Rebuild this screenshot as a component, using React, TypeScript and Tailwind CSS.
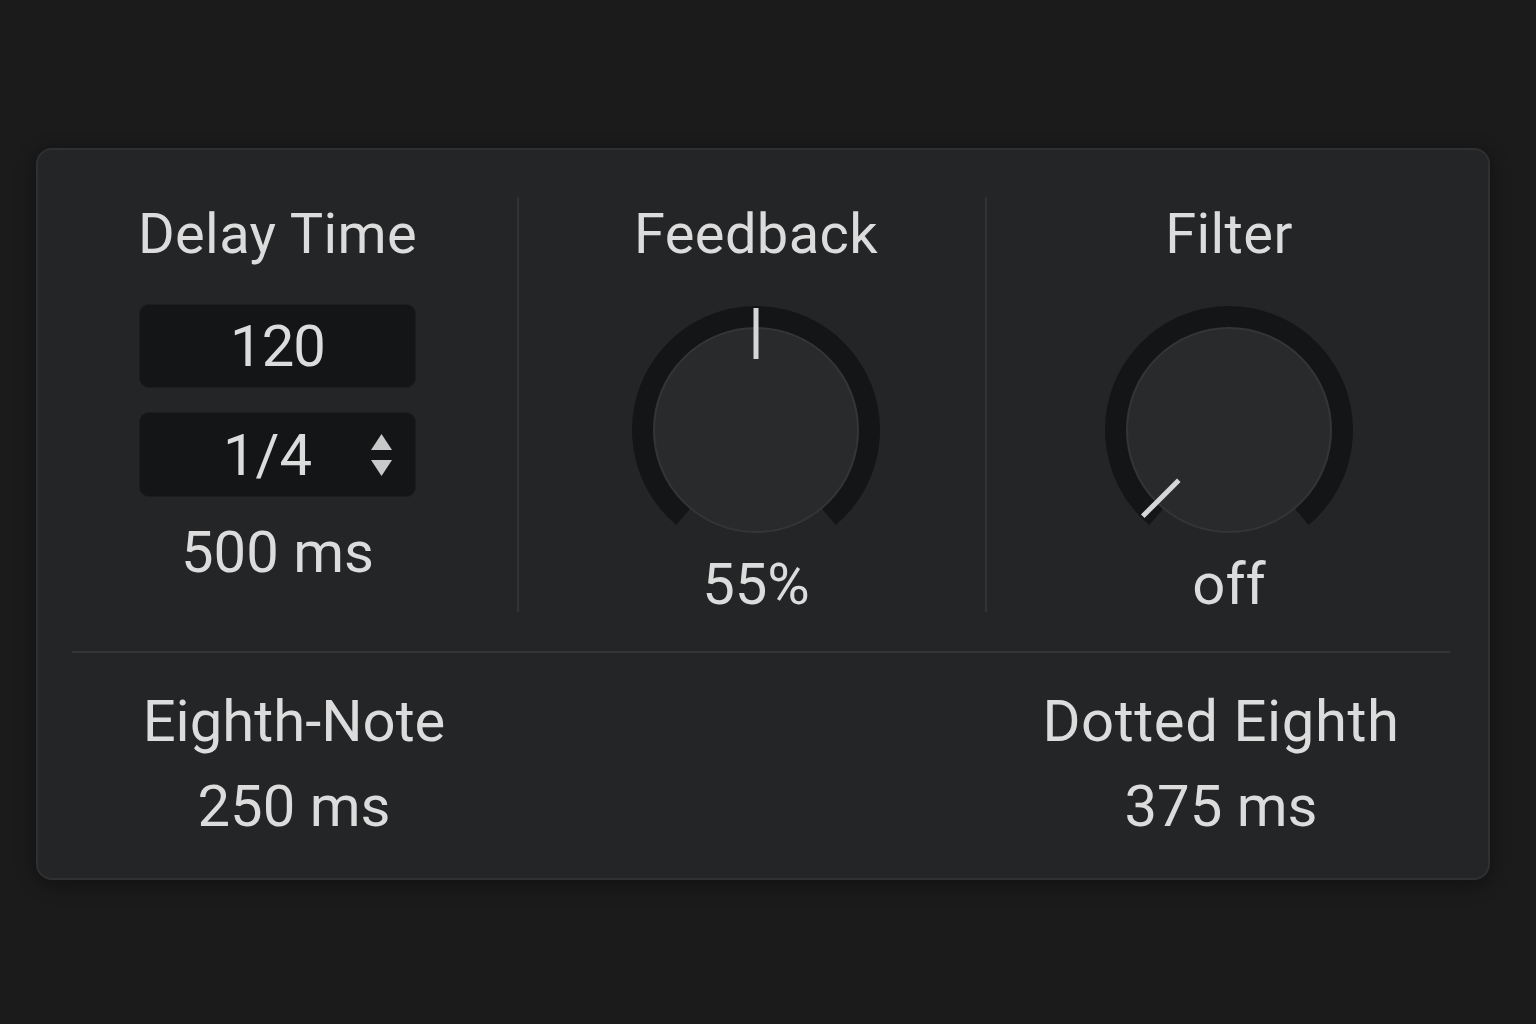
const font = { fontFamily: "Roboto, 'Liberation Sans', sans-serif" };

function Knob({ angle }: { angle: number }) {
  // angle in degrees from top, clockwise
  const c = 125;
  const rad = (angle * Math.PI) / 180;
  const dx = Math.sin(rad);
  const dy = -Math.cos(rad);
  const r1 = 122;
  const r2 = 71;
  return (
    <svg width="250" height="250" viewBox="0 0 250 250">
      <path
        d="M 52.4 211.6 A 113 113 0 1 1 197.6 211.6"
        fill="none"
        stroke="#141516"
        strokeWidth="22"
      />
      <circle cx={c} cy={c} r="102" fill="#292a2c" stroke="#333538" strokeWidth="2" />
      <line
        x1={c + dx * r1}
        y1={c + dy * r1}
        x2={c + dx * r2}
        y2={c + dy * r2}
        stroke="#d6d6d6"
        strokeWidth="5"
      />
    </svg>
  );
}

function Title({ children }: { children: string }) {
  return <p className="text-[56px] leading-none text-[#dcdcdc] tracking-[0.4px]">{children}</p>;
}

function Value({ children, className = "" }: { children: string; className?: string }) {
  return <p className={`text-[58px] leading-none text-[#dcdcdc] ${className}`}>{children}</p>;
}

export default function App() {
  return (
    <div className="min-h-[1024px] w-[1536px] bg-[#1b1b1b] pt-[148px] pl-[36px]" style={font}>
      <div className="w-[1454px] h-[732px] rounded-[16px] border-2 border-[#2e3032] bg-[#242527] shadow-[0_4px_20px_rgba(0,0,0,0.4)] flex flex-col">
        <div className="flex pt-[47px] h-[501px]">
          <div className="w-[479px] flex flex-col items-center pt-[9px]">
            <Title>Delay Time</Title>
            <div className="mt-[42px] w-[277px] h-[84px] rounded-[10px] bg-[#141517] border border-[#1c1d1f] flex items-center justify-center">
              <Value className="tracking-[-1px]">120</Value>
            </div>
            <div className="mt-[24px] w-[277px] h-[85px] rounded-[10px] bg-[#141517] border border-[#1c1d1f] flex items-center pl-[24px] pr-[23px]">
              <Value className="flex-1 text-center">1/4</Value>
              <div className="flex flex-col items-center gap-[10px]">
                <svg width="21" height="16" viewBox="0 0 21 16"><path d="M10.5 0 L21 16 L0 16 Z" fill="#c9c9c9" /></svg>
                <svg width="21" height="16" viewBox="0 0 21 16"><path d="M0 0 L21 0 L10.5 16 Z" fill="#c9c9c9" /></svg>
              </div>
            </div>
            <Value className="mt-[26px]">500 ms</Value>
          </div>
          <div className="w-[2px] h-[415px] bg-[#313336]" />
          <div className="w-[466px] flex flex-col items-center pt-[9px] pl-[8px]">
            <Title>Feedback</Title>
            <div className="mt-[43px]">
              <Knob angle={0} />
            </div>
            <Value>55%</Value>
          </div>
          <div className="w-[2px] h-[415px] bg-[#313336]" />
          <div className="w-[484px] flex flex-col items-center pt-[9px]">
            <Title>Filter</Title>
            <div className="mt-[43px]">
              <Knob angle={-135} />
            </div>
            <Value>off</Value>
          </div>
        </div>
        <div className="ml-[34px] mr-[38px] h-[2px] bg-[#323437]" />
        <div className="flex pt-[39px]">
          <div className="w-[512px] flex flex-col items-center">
            <Value>Eighth-Note</Value>
            <Value className="mt-[27px]">250 ms</Value>
          </div>
          <div className="flex-1" />
          <div className="w-[534px] flex flex-col items-center">
            <Value className="tracking-[0.6px]">Dotted Eighth</Value>
            <Value className="mt-[27px]">375 ms</Value>
          </div>
        </div>
      </div>
    </div>
  );
}
